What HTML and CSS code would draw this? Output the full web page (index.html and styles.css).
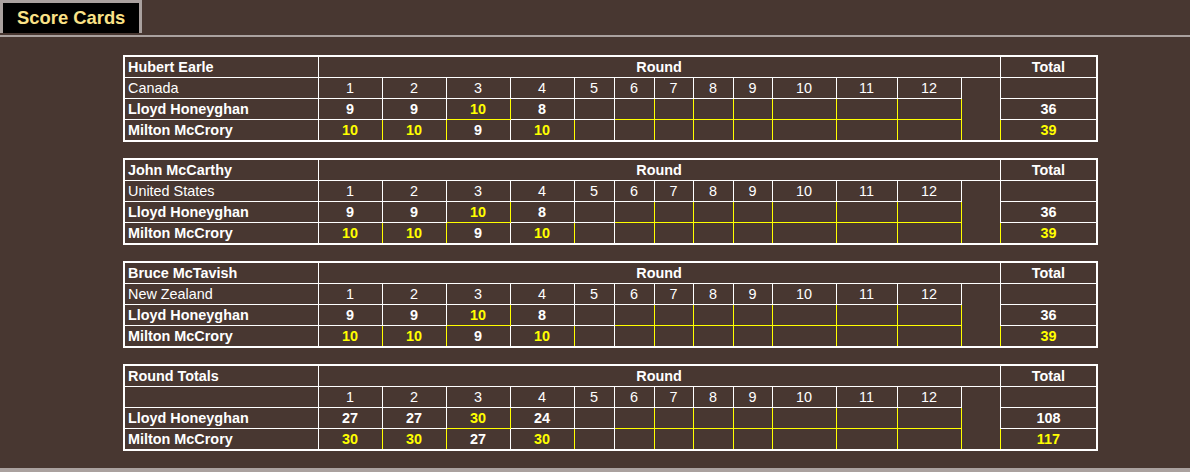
FILE: index.html
```html
<!DOCTYPE html>
<html lang="en">
<head>
<meta charset="utf-8">
<title>Score Cards</title>
<link rel="stylesheet" href="styles.css">
</head>
<body>
<header class="tabs"><div class="tab">Score Cards</div></header>
<main class="cards">

<table class="card">
<colgroup><col class="c-name"><col class="c-w"><col class="c-w"><col class="c-w"><col class="c-w"><col class="c-s"><col class="c-s"><col class="c-xs"><col class="c-s"><col class="c-xs"><col class="c-w"><col class="c-m"><col class="c-w"><col class="c-xs"><col class="c-total"></colgroup>
<tr class="head"><th class="name">Hubert Earle</th><th colspan="13">Round</th><th>Total</th></tr>
<tr><td class="name plain">Canada</td><td>1</td><td>2</td><td>3</td><td>4</td><td>5</td><td>6</td><td>7</td><td>8</td><td>9</td><td>10</td><td>11</td><td>12</td><td class="gap" rowspan="3"></td><td></td></tr>
<tr class="player"><td class="name">Lloyd Honeyghan</td><td>9</td><td>9</td><td class="win">10</td><td>8</td><td></td><td class="win"></td><td class="win"></td><td class="win"></td><td class="win"></td><td class="win"></td><td class="win"></td><td class="win"></td><td>36</td></tr>
<tr class="player"><td class="name">Milton McCrory</td><td class="win">10</td><td class="win">10</td><td>9</td><td class="win">10</td><td></td><td class="win"></td><td class="win"></td><td class="win"></td><td class="win"></td><td class="win"></td><td class="win"></td><td class="win"></td><td class="win">39</td></tr>
</table>

<table class="card">
<colgroup><col class="c-name"><col class="c-w"><col class="c-w"><col class="c-w"><col class="c-w"><col class="c-s"><col class="c-s"><col class="c-xs"><col class="c-s"><col class="c-xs"><col class="c-w"><col class="c-m"><col class="c-w"><col class="c-xs"><col class="c-total"></colgroup>
<tr class="head"><th class="name">John McCarthy</th><th colspan="13">Round</th><th>Total</th></tr>
<tr><td class="name plain">United States</td><td>1</td><td>2</td><td>3</td><td>4</td><td>5</td><td>6</td><td>7</td><td>8</td><td>9</td><td>10</td><td>11</td><td>12</td><td class="gap" rowspan="3"></td><td></td></tr>
<tr class="player"><td class="name">Lloyd Honeyghan</td><td>9</td><td>9</td><td class="win">10</td><td>8</td><td></td><td class="win"></td><td class="win"></td><td class="win"></td><td class="win"></td><td class="win"></td><td class="win"></td><td class="win"></td><td>36</td></tr>
<tr class="player"><td class="name">Milton McCrory</td><td class="win">10</td><td class="win">10</td><td>9</td><td class="win">10</td><td></td><td class="win"></td><td class="win"></td><td class="win"></td><td class="win"></td><td class="win"></td><td class="win"></td><td class="win"></td><td class="win">39</td></tr>
</table>

<table class="card">
<colgroup><col class="c-name"><col class="c-w"><col class="c-w"><col class="c-w"><col class="c-w"><col class="c-s"><col class="c-s"><col class="c-xs"><col class="c-s"><col class="c-xs"><col class="c-w"><col class="c-m"><col class="c-w"><col class="c-xs"><col class="c-total"></colgroup>
<tr class="head"><th class="name">Bruce McTavish</th><th colspan="13">Round</th><th>Total</th></tr>
<tr><td class="name plain">New Zealand</td><td>1</td><td>2</td><td>3</td><td>4</td><td>5</td><td>6</td><td>7</td><td>8</td><td>9</td><td>10</td><td>11</td><td>12</td><td class="gap" rowspan="3"></td><td></td></tr>
<tr class="player"><td class="name">Lloyd Honeyghan</td><td>9</td><td>9</td><td class="win">10</td><td>8</td><td></td><td class="win"></td><td class="win"></td><td class="win"></td><td class="win"></td><td class="win"></td><td class="win"></td><td class="win"></td><td>36</td></tr>
<tr class="player"><td class="name">Milton McCrory</td><td class="win">10</td><td class="win">10</td><td>9</td><td class="win">10</td><td></td><td class="win"></td><td class="win"></td><td class="win"></td><td class="win"></td><td class="win"></td><td class="win"></td><td class="win"></td><td class="win">39</td></tr>
</table>

<table class="card">
<colgroup><col class="c-name"><col class="c-w"><col class="c-w"><col class="c-w"><col class="c-w"><col class="c-s"><col class="c-s"><col class="c-xs"><col class="c-s"><col class="c-xs"><col class="c-w"><col class="c-m"><col class="c-w"><col class="c-xs"><col class="c-total"></colgroup>
<tr class="head"><th class="name">Round Totals</th><th colspan="13">Round</th><th>Total</th></tr>
<tr><td class="name plain"></td><td>1</td><td>2</td><td>3</td><td>4</td><td>5</td><td>6</td><td>7</td><td>8</td><td>9</td><td>10</td><td>11</td><td>12</td><td class="gap" rowspan="3"></td><td></td></tr>
<tr class="player"><td class="name">Lloyd Honeyghan</td><td>27</td><td>27</td><td class="win">30</td><td>24</td><td></td><td class="win"></td><td class="win"></td><td class="win"></td><td class="win"></td><td class="win"></td><td class="win"></td><td class="win"></td><td>108</td></tr>
<tr class="player"><td class="name">Milton McCrory</td><td class="win">30</td><td class="win">30</td><td>27</td><td class="win">30</td><td></td><td class="win"></td><td class="win"></td><td class="win"></td><td class="win"></td><td class="win"></td><td class="win"></td><td class="win"></td><td class="win">117</td></tr>
</table>

</main>
<div class="footer-line"></div>
</body>
</html>
```

FILE: styles.css
```css
html, body {
  margin: 0;
  padding: 0;
}
body {
  background: #483731;
  font-family: "Liberation Sans", Arial, sans-serif;
  color: #fff;
  height: 472px;
  overflow: hidden;
}
.tabs {
  display: flex;
  padding-bottom: 2px;
  border-bottom: 2px solid #aaa19f;
}
.tab {
  background: #000;
  border: 3px solid #aaa19f;
  border-bottom: 0;
  height: 30px;
  line-height: 30px;
  padding: 0 14px;
  font-size: 18.4px;
  font-weight: bold;
  color: #fbe287;
}
.cards {
  padding: 18px 0 17px 123px;
}
.card {
  border-collapse: collapse;
  table-layout: fixed;
  width: 975px;
  border: 2px solid #fff;
  margin-bottom: 16px;
  font-size: 14.4px;
}
.card:last-child {
  margin-bottom: 0;
}
.c-name { width: 194px; }
.c-w { width: 64px; }
.c-m { width: 61px; }
.c-s { width: 40px; }
.c-xs { width: 39px; }
.c-total { width: 97px; }
.card th,
.card td {
  border: 1px solid #fff;
  padding: 0 3px;
  height: 20px;
  line-height: 20px;
  text-align: center;
  font-weight: normal;
  white-space: nowrap;
  overflow: hidden;
  color: #fff;
}
.card .head th { font-weight: bold; }
.card .player td { font-weight: bold; }
.card .name { text-align: left; }
.card .plain { font-weight: normal; }
.card .win {
  border-color: #ffff00;
  color: #ffff00;
}
.card .gap {
  border: none;
}
.footer-line {
  height: 4px;
  background: #aaa19f;
}
```
